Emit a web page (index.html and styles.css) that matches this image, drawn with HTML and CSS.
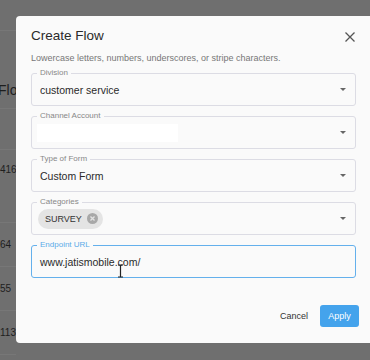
FILE: index.html
```html
<!DOCTYPE html>
<html lang="en">
<head>
    <meta charset="UTF-8">
    <meta name="viewport" content="width=device-width, initial-scale=1.0">
    <title>Create Flow</title>
    <link rel="stylesheet" href="styles.css">
</head>
<body>
    <div class="page">
        <div class="page-row page-top"></div>
        <div class="page-row page-title">Flow</div>
        <div class="page-row page-gap"></div>
        <div class="page-row page-tall">416</div>
        <div class="page-row">64</div>
        <div class="page-row">55</div>
        <div class="page-row">113</div>
    </div>

    <div class="dialog">
        <div class="dialog-header">
            <h2>Create Flow</h2>
            <svg class="close" width="10" height="10" viewBox="0 0 10 10">
                <path d="M0.5 0.5 L9.5 9.5 M9.5 0.5 L0.5 9.5" stroke="#555" stroke-width="1.3" fill="none"/>
            </svg>
        </div>
        <div class="dialog-content">
            <p class="hint">Lowercase letters, numbers, underscores, or stripe characters.</p>

            <div class="field">
                <span class="label">Division</span>
                <span class="value">customer service</span>
                <span class="arrow"></span>
            </div>
            <div class="field">
                <span class="label">Channel Account</span>
                <span class="redact"></span>
                <span class="arrow"></span>
            </div>
            <div class="field">
                <span class="label">Type of Form</span>
                <span class="value">Custom Form</span>
                <span class="arrow"></span>
            </div>
            <div class="field">
                <span class="label">Categories</span>
                <span class="chip">SURVEY
                    <svg width="11" height="11" viewBox="0 0 12 12">
                        <circle cx="6" cy="6" r="6" fill="#a8a8a8"/>
                        <path d="M3.8 3.8 L8.2 8.2 M8.2 3.8 L3.8 8.2" stroke="#e2e2e2" stroke-width="1.5"/>
                    </svg>
                </span>
                <span class="arrow"></span>
            </div>
            <div class="field focused">
                <span class="label">Endpoint URL</span>
                <span class="value">www.jatismobile.com/</span>
                <svg class="ibeam" width="7" height="14" viewBox="0 0 7 14">
                    <path d="M1 1 H6 M3.5 1 V13 M1 13 H6" stroke="#222" stroke-width="1.2" fill="none"/>
                </svg>
            </div>
        </div>
        <div class="dialog-actions">
            <button class="btn-cancel">Cancel</button>
            <button class="btn-apply">Apply</button>
        </div>
    </div>
</body>
</html>
```

FILE: styles.css
```css
body {
    margin: 0;
    height: 360px;
    overflow: hidden;
    font-family: "Liberation Sans", Arial, sans-serif;
    background-color: #6f6f6f;
}
.page {
    display: flex;
    flex-direction: column;
    width: 16px;
    overflow: hidden;
    color: #1e1e1e;
}
.page-row {
    height: 43px;
    line-height: 43px;
    border-bottom: 1px solid #777;
    font-size: 10px;
    white-space: nowrap;
    flex-shrink: 0;
}
.page-top {
    height: 30px;
}
.page-title {
    height: 78px;
    line-height: 18px;
    box-sizing: border-box;
    padding-top: 50px;
    font-size: 14px;
    margin-left: -2px;
}
.page-gap {
    height: 40px;
}
.page-tall {
    height: 72px;
    line-height: 40px;
}
.dialog {
    position: absolute;
    left: 16px;
    top: 16px;
    width: 358px;
    height: 327px;
    background-color: #fafafa;
    border-radius: 4px 0 0 4px;
    display: flex;
    flex-direction: column;
    box-sizing: border-box;
    padding: 0 18px 0 15px;
}
.dialog-header {
    display: flex;
    justify-content: space-between;
    align-items: center;
    height: 38px;
    flex-shrink: 0;
}
.dialog-header h2 {
    margin: 0;
    padding-top: 1px;
    font-size: 13.5px;
    font-weight: 400;
    color: #2a2a2a;
}
.close {
    margin-right: 1px;
    margin-top: 3px;
}
.dialog-content {
    display: flex;
    flex-direction: column;
    gap: 10px;
    overflow: hidden;
    flex: 1;
}
.hint {
    margin: 0;
    font-size: 9px;
    line-height: 9px;
    color: #777;
    white-space: nowrap;
}
.field {
    position: relative;
    height: 33px;
    box-sizing: border-box;
    border: 1px solid #dcdce4;
    border-radius: 3px;
    display: flex;
    align-items: center;
    padding: 0 9px 0 8px;
    flex-shrink: 0;
}
.field .label {
    position: absolute;
    top: -6px;
    left: 5px;
    padding: 0 3px;
    background-color: #fafafa;
    font-size: 8px;
    line-height: 10px;
    color: #888;
}
.value {
    font-size: 10.5px;
    color: #2a2a2a;
    flex: 1;
}
.redact {
    width: 141px;
    height: 18px;
    margin-left: -3px;
    background-color: #fff;
}
.arrow {
    margin-left: auto;
    width: 0;
    height: 0;
    border-left: 3.5px solid transparent;
    border-right: 3.5px solid transparent;
    border-top: 3.5px solid #666;
}
.chip {
    display: flex;
    align-items: center;
    gap: 5px;
    height: 20px;
    padding: 0 5px 0 7px;
    margin-left: -2px;
    border-radius: 10px;
    background-color: #e4e4e4;
    font-size: 9px;
    color: #333;
}
.field.focused {
    border: 1.5px solid #64b0ec;
}
.field.focused .label {
    color: #5aaae8;
}
.ibeam {
    position: absolute;
    left: 85px;
    top: 18px;
}
.dialog-actions {
    display: flex;
    justify-content: flex-end;
    align-items: flex-end;
    gap: 12px;
    height: 52px;
    box-sizing: border-box;
    margin-right: -3px;
    padding-bottom: 16px;
    flex-shrink: 0;
}
.dialog-actions button {
    font-family: "Liberation Sans", Arial, sans-serif;
    font-size: 9px;
    border: none;
    cursor: pointer;
}
.btn-cancel {
    background: none;
    color: #333;
    padding: 0;
    height: 22px;
}
.btn-apply {
    width: 39px;
    height: 22px;
    background-color: #44a3ec;
    color: #fff;
    border-radius: 3px;
}
```
